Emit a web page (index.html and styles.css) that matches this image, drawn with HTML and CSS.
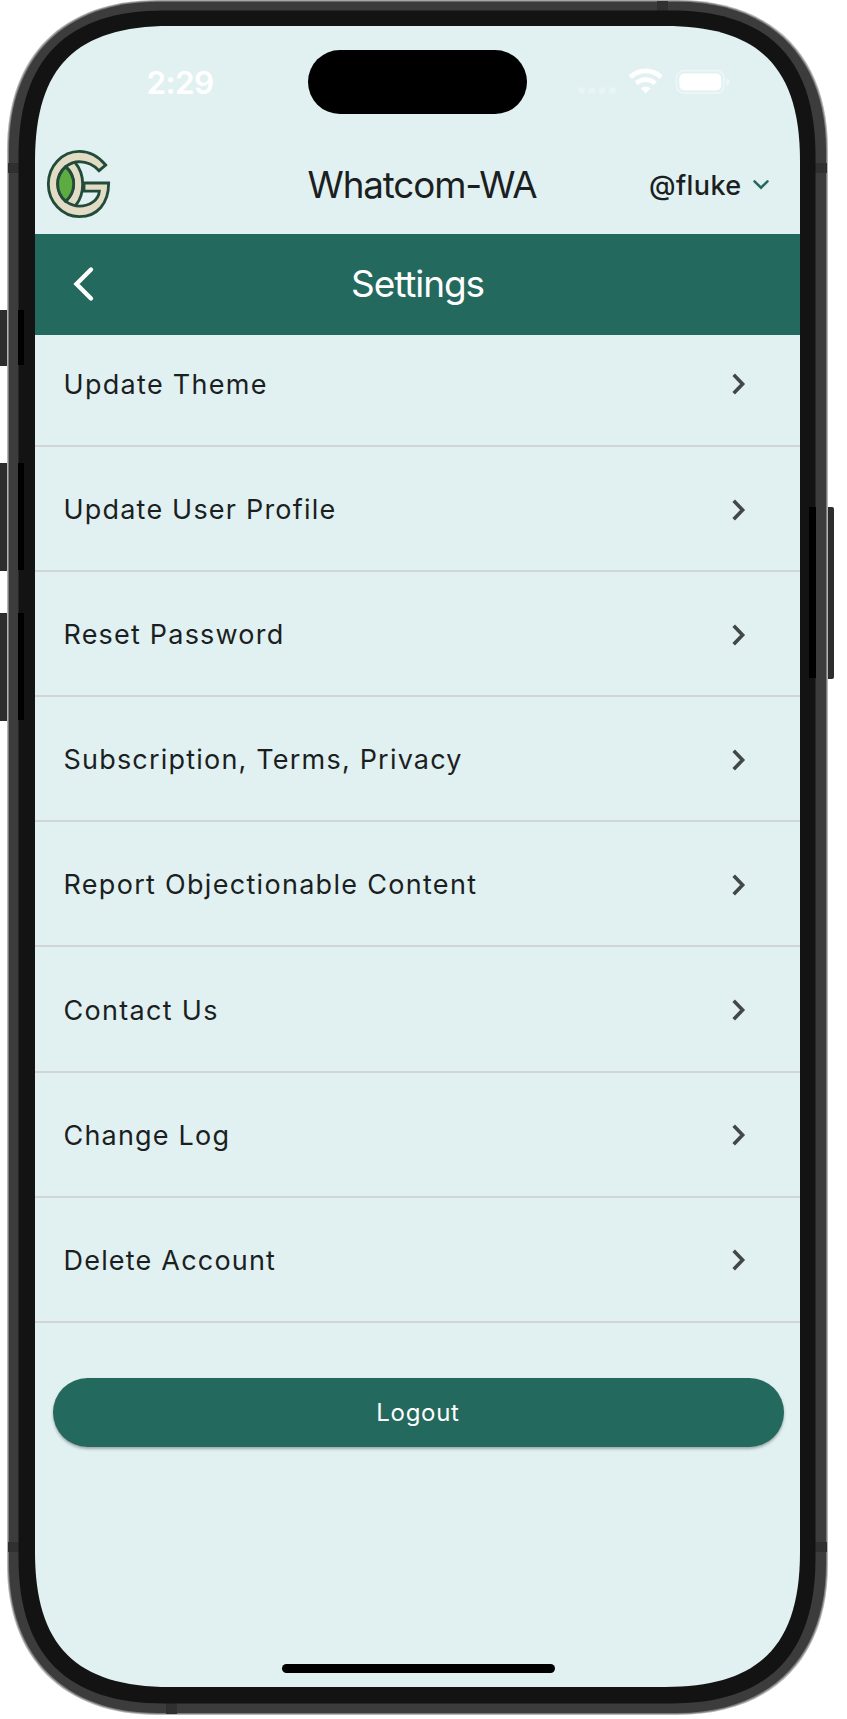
FILE: index.html
```html
<!DOCTYPE html>
<html lang="en">
<head>
<meta charset="utf-8">
<title>Settings</title>
<link rel="stylesheet" href="styles.css">
</head>
<body>
<svg class="defs" width="0" height="0">
  <symbol id="chev" viewBox="0 0 14 22"><path d="M1.7 1.7L10.6 11L1.7 20.3" fill="none" stroke="#434747" stroke-width="3.6"/></symbol>
</svg>
<div class="phone">
  <svg class="frame" width="847" height="1719" viewBox="0 0 847 1719">
    <g fill="#2d2d2d">
      <rect x="-4" y="310" width="14" height="56" rx="2"/>
      <rect x="-4" y="463" width="14" height="108" rx="2"/>
      <rect x="-4" y="613" width="14" height="108" rx="2"/>
      <rect x="822" y="507" width="12" height="172" rx="2"/>
    </g>
    <path d="M7 150C7 55 63 0 158 0H677C772 0 828 55 828 150V1564C828 1659 772 1715 677 1715H158C63 1715 7 1659 7 1564Z" fill="#b5b5b5"/>
    <path d="M8 150C8 56 64 .7 158 .7H677C771 .7 827 56 827 150V1564C827 1658 771 1714 677 1714H158C64 1714 8 1658 8 1564Z" fill="#7c7c7c"/>
    <path d="M9 150C9 57 65 1.7 158 1.7H677C770 1.7 826 57 826 150V1564C826 1657 770 1713 677 1713H158C65 1713 9 1657 9 1564Z" fill="#3c3c3c"/>
    <g fill="#303030">
      <rect x="8" y="163" width="11" height="10"/><rect x="815" y="163" width="12" height="10"/>
      <rect x="8" y="1542" width="11" height="10"/><rect x="815" y="1542" width="12" height="10"/>
      <rect x="657" y="1" width="11" height="10"/><rect x="166" y="1703" width="11" height="11"/>
    </g>
    <path d="M18.5 156C18.5 59 67 10.5 164 10.5H671C768 10.5 815.5 59 815.5 156V1558C815.5 1655 768 1703.5 671 1703.5H164C67 1703.5 18.5 1655 18.5 1558Z" fill="#131313"/>
    <g fill="#000">
      <rect x="18" y="310" width="6" height="55"/><rect x="18" y="463" width="6" height="107"/>
      <rect x="18" y="613" width="6" height="107"/><rect x="809" y="507" width="7" height="171"/>
    </g>
    <path d="M35 161C35 67 76 26 170 26H665C759 26 800 67 800 161V1552C800 1646 759 1687 665 1687H170C76 1687 35 1646 35 1552Z" fill="#e1f1f2"/>
  </svg>
  <main class="screen">
    <div class="status">
      <span class="time">2:29</span>
      <span class="island"></span>
      <svg class="signals" width="154" height="28" viewBox="0 0 154 28">
        <g fill="#e8f5f6"><circle cx="4.500" cy="22.500" r="3.300"/><circle cx="14.800" cy="22.500" r="3.300"/><circle cx="25.200" cy="22.500" r="3.300"/><circle cx="35.500" cy="22.500" r="3.300"/></g>
        <g fill="none" stroke="#fff" stroke-width="4.700"><path d="M53.300 9.200A22 22 0 0 1 84.100 9.200"/><path d="M59.200 15.400A13.600 13.600 0 0 1 78.200 15.400"/></g>
        <path d="M63.800 20.200Q68.700 16.600 73.600 20.200L68.700 25.300Z" fill="#fff"/>
        <rect x="99.500" y="2.700" width="47.500" height="22.500" rx="7.500" fill="none" stroke="#edf7f8" stroke-width="1.700"/>
        <rect x="102.300" y="5.500" width="42" height="17" rx="5" fill="#fff"/>
        <path d="M149.500 10Q152.500 11 152.500 14T149.500 18Z" fill="#edf7f8"/>
      </svg>
    </div>
    <header class="header">
      <svg class="logo" width="80" height="85" viewBox="0 0 240 255" stroke="#234b3c" stroke-width="8.500" fill="#e3dcc5">
        <path d="M79 76L104 66Q128 94 128 132T108 195L92 200L77 184Q101 162 101 132T77 80Z"/>
        <path d="M197 75Q163 34 118 34A93 98 0 0 0 25 132A93 98 0 0 0 118 230C172 230 206 190 206 129H132V153.500H178C176 180 150 198.500 118 198.500Q98 198 77 184Q53 164 53 132T77 80Q96 65 118 65Q153 66 177 92Z"/>
        <path d="M77 80Q101 102 101 132T77 184Q53 162 53 132T77 80Z" fill="#5dac41"/>
      </svg>
      <h1 class="place">Whatcom-WA</h1>
      <div class="user"><span class="handle">@fluke</span>
        <svg width="18" height="12" viewBox="0 0 18 12"><path d="M2.500 2.300L9 8.700L15.500 2.300" fill="none" stroke="#24695d" stroke-width="2.500" stroke-linecap="round"/></svg>
      </div>
    </header>
    <nav class="bar">
      <svg class="back" width="22" height="36" viewBox="0 0 22 36"><path d="M18 3.500L3.500 18L18 32.500" fill="none" stroke="#fff" stroke-width="4.400" stroke-linecap="round"/></svg>
      <h2 class="title">Settings</h2>
    </nav>
    <div class="viewport">
      <ul class="list">
        <li class="row">Update Theme<svg class="chev"><use href="#chev"/></svg></li>
        <li class="row"><span class="snug">Update User Profile</span><svg class="chev"><use href="#chev"/></svg></li>
        <li class="row"><span class="snug">Reset Password</span><svg class="chev"><use href="#chev"/></svg></li>
        <li class="row"><span class="snug">Subscription, Terms, Privacy</span><svg class="chev"><use href="#chev"/></svg></li>
        <li class="row">Report Objectionable Content<svg class="chev"><use href="#chev"/></svg></li>
        <li class="row">Contact Us<svg class="chev"><use href="#chev"/></svg></li>
        <li class="row"><span class="snug">Change Log</span><svg class="chev"><use href="#chev"/></svg></li>
        <li class="row"><span class="snug">Delete Account</span><svg class="chev"><use href="#chev"/></svg></li>
      </ul>
    </div>
    <button class="logout">Logout</button>
    <div class="home"></div>
  </main>
</div>
</body>
</html>
```
FILE: styles.css
```css
* { box-sizing: border-box; }
body { margin: 0; background: #fff; font-family: Inter, "Liberation Sans", sans-serif; color: #1c1f1f; }
h1, h2, ul { margin: 0; padding: 0; font-weight: 400; }
.defs { position: absolute; }
.phone { position: relative; width: 847px; height: 1719px; padding: 26px 47px 32px 35px; overflow: hidden; }
.frame { position: absolute; left: 0; top: 0; }
.screen { position: relative; display: flex; flex-direction: column; width: 765px; height: 1661px; }
.status { display: grid; grid-template-columns: 273.300px 218.700px 1fr; height: 112px; padding-top: 24px; }
.time { padding-left: 111.500px; line-height: 65px; font-size: 31.500px; font-weight: 600; letter-spacing: -.6px; color: #fff; }
.island { height: 64px; border-radius: 32px; background: #000; }
.signals { margin: 18px 0 0 50.500px; }
.header { display: grid; grid-template-columns: 236px 302px 1fr; align-items: center; height: 96px; }
.logo { margin: -7px 0 0 5px; }
.place { font-size: 36.800px; text-align: center; letter-spacing: -1.150px; white-space: nowrap; line-height: 94px; padding-bottom: 2px; }
.user { display: flex; align-items: center; gap: 10px; padding: 0 0 2px 76px; font-size: 27px; font-weight: 500; letter-spacing: .4px; }
.bar { display: grid; grid-template-columns: 236px 293px 1fr; align-items: center; height: 101.300px; background: #24695d; color: #fff; }
.back { margin: -2px 0 0 38px; }
.title { text-align: center; font-size: 37px; letter-spacing: -1.100px; padding-bottom: 2px; }
.viewport { display: flex; flex-direction: column; justify-content: flex-end; height: 987.500px; overflow: hidden; }
.list { list-style: none; }
.row { display: flex; flex: none; align-items: center; justify-content: space-between; height: 125.120px; padding: 2px 54px 0 28.500px; border-bottom: 2px solid #d2d5d6; font-size: 27px; letter-spacing: 1.300px; white-space: nowrap; }
.snug { letter-spacing: 1.200px; }
.chev { width: 14px; height: 22px; }
.logout { flex: none; width: 731px; height: 69.500px; margin: 55px 0 0 17.500px; border: 0; border-radius: 35px; background: #24695d; color: #fff; font: 400 24px Inter, sans-serif; letter-spacing: .7px; box-shadow: 0 2px 3px rgba(0,0,0,.3); }
.home { width: 273px; height: 9px; margin: auto 0 14px 246.500px; border-radius: 5px; background: #000; }
```
